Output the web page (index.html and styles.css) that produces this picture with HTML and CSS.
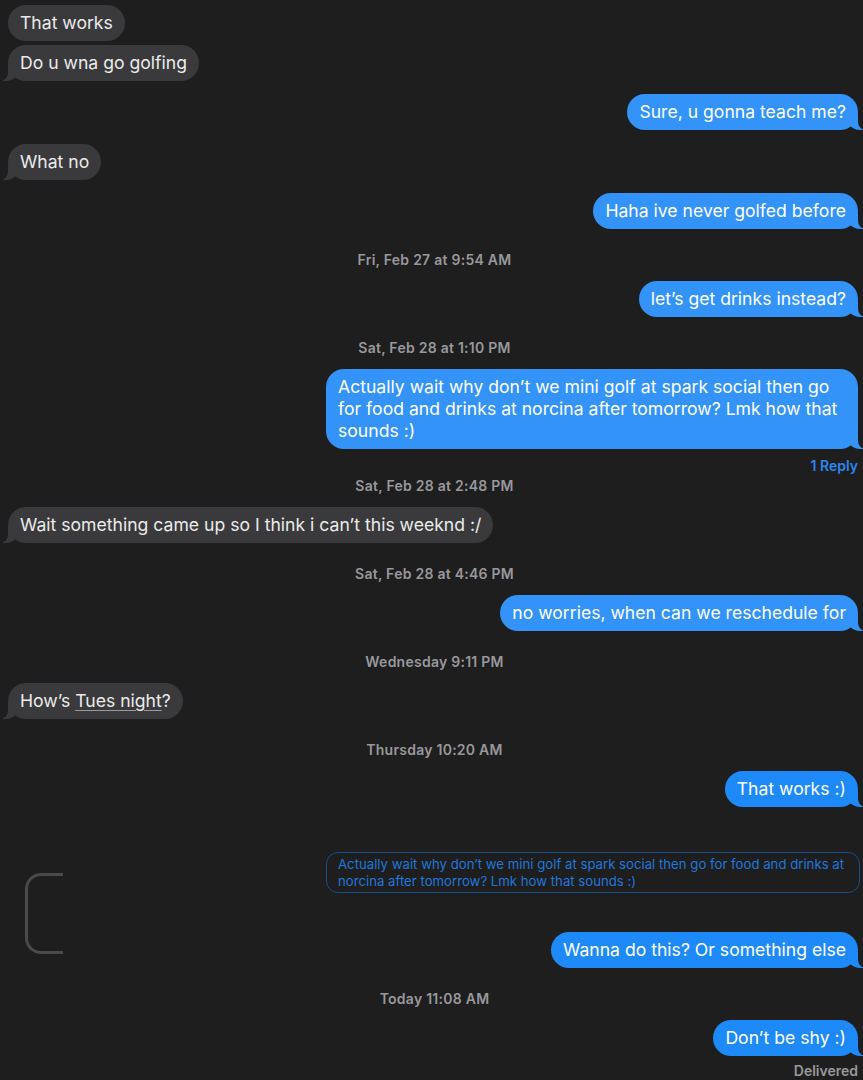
FILE: index.html
```
<html>
<head>
    <meta charset="utf-8">
    <title>Messages</title>
    <link rel="stylesheet" href="styles.css">
</head>
<body>
    <div class="chat">
        <div class="msg in">That works</div>
        <div class="msg in tail gap-4">Do u wna go golfing</div>
        <div class="msg out tail">Sure, u gonna teach me?</div>
        <div class="msg in tail gap-14">What no</div>
        <div class="msg out tail">Haha ive never golfed before</div>

        <div class="stamp">Fri, Feb 27 at 9:54 AM</div>
        <div class="msg out tail">let’s get drinks instead?</div>

        <div class="stamp">Sat, Feb 28 at 1:10 PM</div>
        <div class="msg out tail wide">Actually wait why don’t we mini golf at spark social then go for food and drinks at norcina after tomorrow? Lmk how that sounds :)</div>
        <div class="reply-count">1 Reply</div>

        <div class="stamp near">Sat, Feb 28 at 2:48 PM</div>
        <div class="msg in tail">Wait something came up so I think i can’t this weeknd :/</div>

        <div class="stamp">Sat, Feb 28 at 4:46 PM</div>
        <div class="msg out tail">no worries, when can we reschedule for</div>

        <div class="stamp">Wednesday 9:11 PM</div>
        <div class="msg in tail">How’s <u>Tues night</u>?</div>

        <div class="stamp">Thursday 10:20 AM</div>
        <div class="msg out deep tail">That works :)</div>

        <div class="thread">
            <div class="thread-line"></div>
            <div class="quote">Actually wait why don’t we mini golf at spark social then go for food and drinks at norcina after tomorrow? Lmk how that sounds :)</div>
            <div class="msg out deep tail">Wanna do this? Or something else</div>
        </div>

        <div class="stamp">Today 11:08 AM</div>
        <div class="msg out deep tail">Don’t be shy :)</div>
        <div class="status">Delivered</div>
    </div>
</body>
</html>
```

FILE: styles.css
```
* {
    margin: 0;
    padding: 0;
    box-sizing: border-box;
}

body {
    background: #1e1e1e;
    font-family: Inter, "Liberation Sans", sans-serif;
    color: #ebebeb;
}

.chat {
    display: flex;
    flex-direction: column;
    padding: 5px 5px 0 8px;
}

.msg {
    position: relative;
    max-width: 532px;
    padding: 7px 12px;
    border-radius: 18px;
    font-size: 17.6px;
    line-height: 22px;
    margin-top: 13px;
}

.msg u {
    text-decoration-color: #9a9a9a;
    text-underline-offset: 3px;
    line-height: 1;
}

.chat > .msg:first-child {
    margin-top: 0;
}

.gap-4 {
    margin-top: 4px !important;
}

.gap-14 {
    margin-top: 14px;
}

.in {
    align-self: flex-start;
    background: #3a3a3c;
}

.out {
    align-self: flex-end;
    background: #3393f8;
    color: #fff;
}

.out.deep {
    background: #1e8af9;
}

.wide {
    width: 532px;
}

/* tails */
.tail::before,
.tail::after {
    content: "";
    position: absolute;
    bottom: 0;
    height: 16px;
}

.in.tail::before {
    left: -5px;
    width: 16px;
    background: #3a3a3c;
    border-bottom-right-radius: 13px;
}

.in.tail::after {
    left: -10px;
    width: 10px;
    background: #1e1e1e;
    border-bottom-right-radius: 8px;
}

.out.tail::before {
    right: -5px;
    width: 16px;
    background: inherit;
    border-bottom-left-radius: 13px;
}

.out.tail::after {
    right: -10px;
    width: 10px;
    background: #1e1e1e;
    border-bottom-left-radius: 8px;
}

.stamp {
    align-self: center;
    height: 16px;
    margin: 23px -3px 0 0;
    font-size: 14px;
    line-height: 16px;
    letter-spacing: 0.25px;
    font-weight: 600;
    color: #98989c;
}

.stamp.near {
    margin-top: 4px;
}

.reply-count {
    align-self: flex-end;
    height: 16px;
    margin-top: 9px;
    font-size: 14px;
    line-height: 16px;
    font-weight: 600;
    color: #2b86ee;
}

.thread {
    position: relative;
    display: flex;
    flex-direction: column;
    margin-top: 45px;
}

.thread-line {
    position: absolute;
    left: 17px;
    top: 21px;
    width: 38px;
    height: 81px;
    border: 3px solid #4a4a4b;
    border-right: none;
    border-radius: 16px 0 0 16px;
}

.quote {
    align-self: flex-end;
    position: relative;
    width: 534px;
    margin-right: -2px;
    padding: 3px 11px;
    border: 1px solid #1b4d86;
    border-radius: 12px;
    font-size: 13.2px;
    line-height: 16.5px;
    color: #2077dc;
}

.thread .msg {
    margin-top: 39px;
}

.status {
    align-self: flex-end;
    height: 16px;
    margin-top: 7px;
    font-size: 14px;
    line-height: 16px;
    font-weight: 600;
    color: #98989c;
}
```
